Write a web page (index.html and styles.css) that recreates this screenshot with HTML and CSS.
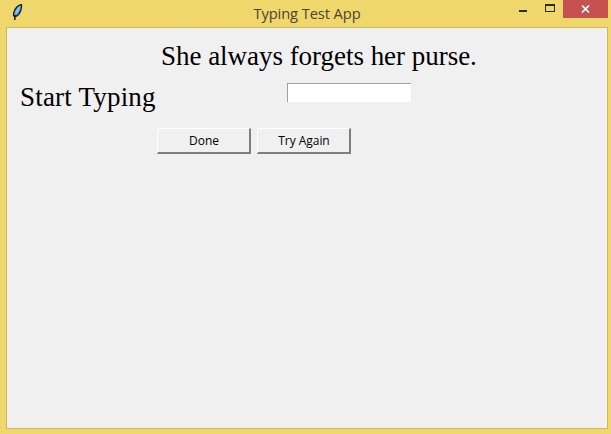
FILE: index.html
```html
<!DOCTYPE html>
<html lang="en">
<head>
<meta charset="utf-8">
<title>Typing Test App</title>
<link rel="stylesheet" href="styles.css">
</head>
<body>
<div class="window">
  <header class="titlebar">
    <svg class="app-icon" width="12" height="17" viewBox="0 0 12 17">
      <path d="M9.4 .6 C6.8 1 3.8 3.8 2.3 7 C1.5 9 1.3 10.6 1.8 12 L3.9 12.4 C6.2 11.3 8 8.8 8.8 6.2 C9.4 4.2 9.8 2.2 9.4 .6 Z" fill="#5fa8ee" stroke="#141d26" stroke-width="1.3"/>
      <path d="M7.4 3.2 L4.2 8.6" fill="none" stroke="#a6d2f8" stroke-width="1.1"/>
      <path d="M3 11 L2.8 16" fill="none" stroke="#0a0d10" stroke-width="1.4"/>
    </svg>
    <div class="title">Typing Test App</div>
    <div class="controls">
      <div class="ctl ctl-min"><span class="min-glyph"></span></div>
      <div class="ctl ctl-max"><span class="max-glyph"></span></div>
      <div class="ctl-close">
        <svg width="9" height="8" viewBox="0 0 9 8"><path d="M1 .5 L8 7.5 M8 .5 L1 7.5" stroke="#fff" stroke-width="1.7" fill="none"/></svg>
      </div>
    </div>
  </header>
  <main class="client">
    <div class="sentence">She always forgets her purse.</div>
    <div class="entry-row">
      <div class="prompt">Start Typing</div>
      <input class="entry" type="text" aria-label="Typing input">
    </div>
    <div class="actions">
      <button class="btn" type="button">Done</button>
      <button class="btn" type="button">Try Again</button>
    </div>
  </main>
</div>
</body>
</html>
```
FILE: styles.css
```css
* { box-sizing: border-box; }
html, body { margin: 0; padding: 0; }
body { width: 611px; height: 434px; overflow: hidden; }
.window {
  width: 611px;
  height: 434px;
  background: #f0d76b;
  display: flex;
  flex-direction: column;
  padding: 0 3px 5px 6px;
}
.titlebar {
  height: 27px;
  flex: none;
  display: flex;
  position: relative;
  align-items: flex-start;
}
.app-icon { margin: 4px 0 0 6px; flex: none; }
.title {
  position: absolute;
  left: 0;
  right: 0;
  top: 4px;
  text-align: center;
  font: 14.7px/18px "Open Sans", sans-serif;
  color: #4a4536;
  letter-spacing: -0.1px;
}
.controls { margin-left: auto; display: flex; position: relative; }
.ctl { width: 27px; height: 18px; position: relative; }
.min-glyph { position: absolute; left: 12px; top: 10px; width: 8px; height: 2px; background: #2b2b26; }
.max-glyph { position: absolute; left: 11px; top: 4px; width: 10px; height: 8px; border: 1px solid #2b2b26; border-top-width: 2px; }
.ctl-close {
  width: 45px;
  height: 18px;
  margin-left: 2px;
  background: #c75050;
  display: flex;
  align-items: center;
  justify-content: center;
}
.client {
  flex: 1;
  background: #f0f0f0;
  border: 1px solid #cdb95a;
  font-family: "Liberation Serif", serif;
  color: #000;
}
.sentence {
  font-size: 27px;
  line-height: 31px;
  margin: 13px 0 0 154px;
  letter-spacing: -0.03px;
}
.entry-row {
  display: flex;
  align-items: flex-start;
  margin-top: 10px;
  padding-left: 13px;
}
.prompt { font-size: 27px; line-height: 31px; width: 267px; flex: none; letter-spacing: 0.2px; }
.entry {
  width: 124px;
  height: 19px;
  margin: 1px 0 0;
  padding: 0;
  background: #fff;
  border: 0;
  border-top: 1px solid #a0a0a0;
  border-left: 1px solid #a0a0a0;
  outline: 0;
  display: block;
}
.actions {
  display: flex;
  gap: 6px;
  margin: 15px 0 0 150px;
}
.btn {
  width: 94px;
  height: 26px;
  padding: 0 0 0 1px;
  background: #f0f0f0;
  border: 2px solid;
  border-color: #fff #7e7e7e #7e7e7e #fff;
  border-top-width: 1px;
  border-left-width: 1px;
  font: 12px/1 "Open Sans", sans-serif;
  letter-spacing: -0.05px;
  color: #000;
}
```
